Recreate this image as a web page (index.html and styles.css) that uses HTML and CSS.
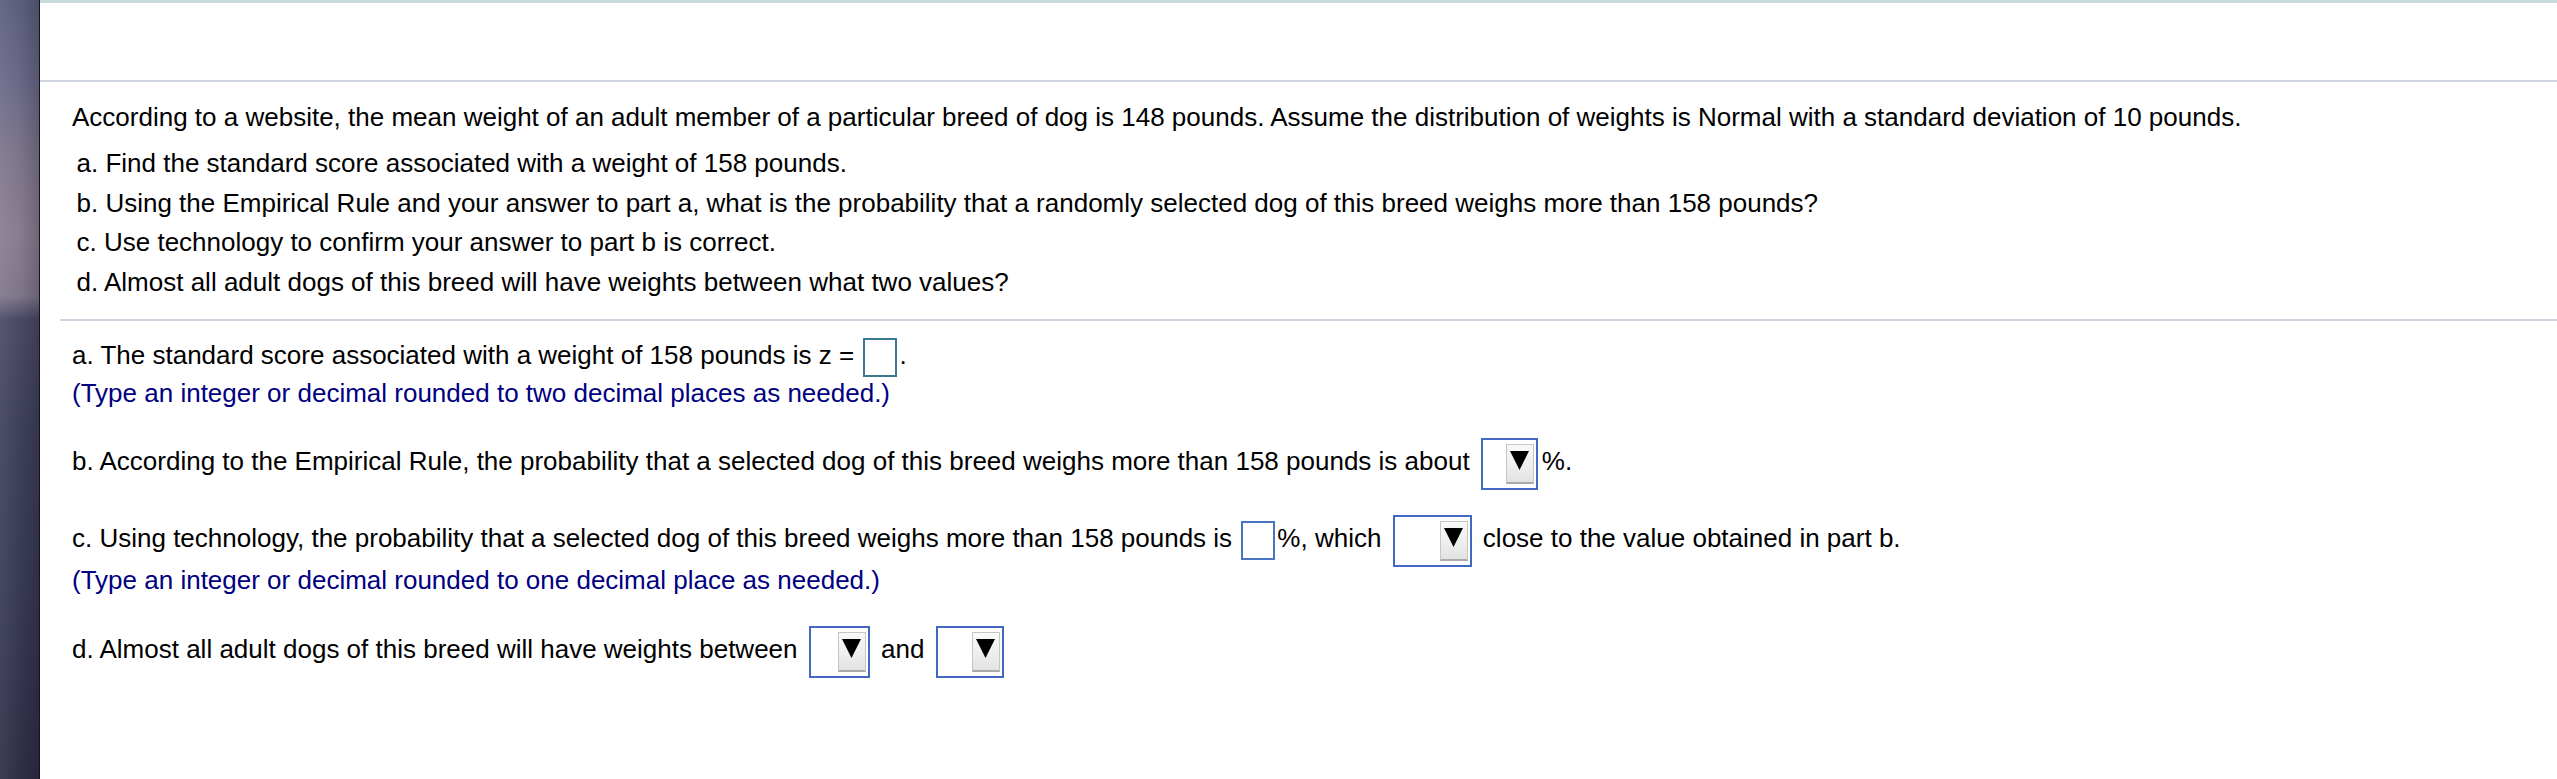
FILE: index.html
```html
<!DOCTYPE html>
<html>
<head>
<meta charset="utf-8">
<title>Question</title>
<link rel="stylesheet" href="styles.css">
</head>
<body>
<div class="sidebar"></div>
<div class="main">
  <div class="toolbar"></div>
  <div class="question">
    <p class="intro">According to a website, the mean weight of an adult member of a particular breed of dog is 148 pounds. Assume the distribution of weights is Normal with a standard deviation of 10 pounds.</p>
    <ul class="parts">
      <li>a. Find the standard score associated with a weight of 158 pounds.</li>
      <li>b. Using the Empirical Rule and your answer to part a, what is the probability that a randomly selected dog of this breed weighs more than 158 pounds?</li>
      <li>c. Use technology to confirm your answer to part b is correct.</li>
      <li>d. Almost all adult dogs of this breed will have weights between what two values?</li>
    </ul>
  </div>
  <div class="sep"></div>
  <div class="answers">
    <div class="row row-a">a. The standard score associated with a weight of 158 pounds is z = <span class="box box-z"></span>.</div>
    <div class="hint">(Type an integer or decimal rounded to two decimal places as needed.)</div>

    <div class="row row-b">b. According to the Empirical Rule, the probability that a selected dog of this breed weighs more than 158 pounds is about <span class="dd dd-b"><span class="btn"><svg class="tri" width="19" height="19" viewBox="0 0 19 19"><polygon points="0,0 19,0 9.5,19" fill="#000"/></svg></span></span>%.</div>

    <div class="row row-c">c. Using technology, the probability that a selected dog of this breed weighs more than 158 pounds is <span class="box box-c"></span>%, which <span class="dd dd-c"><span class="btn"><svg class="tri" width="19" height="19" viewBox="0 0 19 19"><polygon points="0,0 19,0 9.5,19" fill="#000"/></svg></span></span> close to the value obtained in part b.</div>
    <div class="hint hint-c">(Type an integer or decimal rounded to one decimal place as needed.)</div>

    <div class="row row-d">d. Almost all adult dogs of this breed will have weights between <span class="dd dd-d1"><span class="btn"><svg class="tri" width="19" height="19" viewBox="0 0 19 19"><polygon points="0,0 19,0 9.5,19" fill="#000"/></svg></span></span> and <span class="dd dd-d2"><span class="btn"><svg class="tri" width="19" height="19" viewBox="0 0 19 19"><polygon points="0,0 19,0 9.5,19" fill="#000"/></svg></span></span></div>
  </div>
</div>
</body>
</html>
```

FILE: styles.css
```css
html, body {
  margin: 0;
  padding: 0;
  background: #ffffff;
}

body {
  display: flex;
  width: 2557px;
  height: 779px;
  overflow: hidden;
  font-family: "Liberation Sans", Arial, sans-serif;
  font-size: 26px;
  color: #000000;
}

.sidebar {
  flex: 0 0 39px;
  border-right: 1px solid #14141e;
  background:
    linear-gradient(to right, rgba(255, 255, 255, 0.07) 0%, rgba(0, 0, 0, 0) 50%, rgba(0, 0, 0, 0.18) 100%),
    linear-gradient(to bottom,
      #5c5d7d 0%,
      #686887 10%,
      #7d758c 20%,
      #897d8f 30%,
      #7f768b 38%,
      #4a4a67 41%,
      #3f405c 55%,
      #393a55 75%,
      #2e2f47 100%);
}

.main {
  flex: 1 1 auto;
  border-top: 3px solid #c9d9dc;
  min-width: 0;
}

.toolbar {
  height: 77px;
  border-bottom: 2px solid #d0d4de;
}

.question {
  padding: 15.5px 0 0 32px;
}

.intro {
  margin: 0;
  line-height: 39px;
  white-space: nowrap;
}

.parts {
  list-style: none;
  margin: 7.5px 0 0 0;
  padding: 0 0 0 4.5px;
}

.parts li {
  line-height: 39.6px;
  white-space: nowrap;
}

.sep {
  margin: 17px 0 0 20px;
  border-top: 2px solid #d0d4de;
}

.answers {
  padding: 14.5px 0 0 32px;
}

.row,
.hint {
  line-height: 38.5px;
  white-space: nowrap;
}

.hint {
  color: #000080;
}

.row-b {
  margin-top: 29.5px;
}

.row-c {
  margin-top: 38.5px;
}

.hint-c {
  margin-top: 3.5px;
}

.row-d {
  margin-top: 30.5px;
}

.box {
  display: inline-block;
  box-sizing: border-box;
  width: 34px;
  height: 39px;
  margin: -3px 2px;
  vertical-align: middle;
  background: #ffffff;
}

.box-z {
  border: 2px solid #3b7896;
}

.box-c {
  border: 2px solid #4a74c4;
}

.dd {
  display: inline-flex;
  box-sizing: border-box;
  height: 52px;
  margin: -10px 4px;
  padding-right: 2px;
  justify-content: flex-end;
  align-items: center;
  vertical-align: middle;
  border: 2px solid #4268c4;
  background: #ffffff;
}

.dd-b { width: 57px; }
.dd-c { width: 79px; }
.dd-d1 { width: 61px; }
.dd-d2 { width: 68px; }

.btn {
  display: flex;
  box-sizing: border-box;
  width: 28px;
  height: 40px;
  padding-top: 6px;
  justify-content: center;
  align-items: flex-start;
  border: 1px solid #c6c6c6;
  border-bottom: 2px solid #a9a9a9;
  background: linear-gradient(to bottom, #f9f9f9 0%, #ededed 60%, #e2e2e2 100%);
}

.tri {
  display: block;
}
```
